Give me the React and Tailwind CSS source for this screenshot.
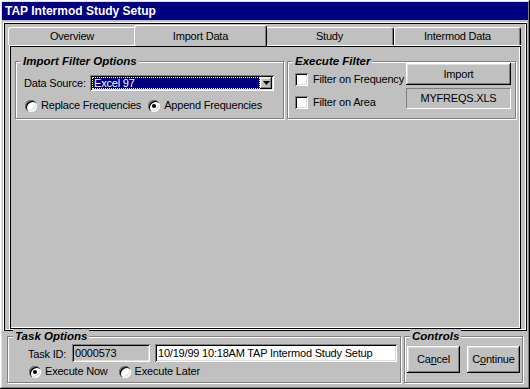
import React from 'react';

const raised = 'shadow-[inset_-1px_-1px_#000,inset_1px_1px_#fff,inset_-2px_-2px_#808080,inset_2px_2px_#dfdfdf]';
const sunken = 'shadow-[inset_1px_1px_#808080,inset_-1px_-1px_#fff,inset_2px_2px_#000,inset_-2px_-2px_#dfdfdf]';

const Group = ({ title, className, children }) => (
  <div className={`relative border border-[#808080] shadow-[inset_1px_1px_#fff,1px_1px_#fff] ${className}`}>
    <span className="absolute top-[-8px] left-[5px] bg-[#c0c0c0] px-[2px] text-[11.5px] font-bold italic leading-[14px] tracking-normal">
      {title}
    </span>
    {children}
  </div>
);

const Radio = ({ checked, label }) => (
  <div className="flex items-center gap-[4px] whitespace-nowrap">
    <span className="w-[12px] h-[12px] rounded-full bg-white flex items-center justify-center shadow-[inset_1px_1px_#808080,inset_2px_2px_#000,inset_-1px_-1px_#fff,inset_-2px_-2px_#dfdfdf]">
      {checked && <span className="w-[4px] h-[4px] rounded-full bg-black" />}
    </span>
    <span>{label}</span>
  </div>
);

const Check = ({ label }) => (
  <div className="flex items-center gap-[5px] h-[13px] whitespace-nowrap">
    <span className={`w-[13px] h-[13px] bg-white ${sunken}`} />
    <span>{label}</span>
  </div>
);

const Tab = ({ label, width }) => (
  <div
    className={`mt-[2px] h-[18px] ${width} flex items-center justify-center border-t border-l border-r border-t-white border-l-white border-r-black rounded-t-[3px] shadow-[inset_-1px_0_#808080]`}
  >
    {label}
  </div>
);

export default function App() {
  return (
    <div
      className={`w-[530px] h-[389px] bg-[#c0c0c0] p-[2px] flex flex-col font-['Liberation_Sans',Arial,sans-serif] text-[11px] tracking-[-0.2px] text-black leading-[13px] ${raised}`}
    >
      <div className="h-[18px] bg-[#000080] text-white font-bold text-[12px] tracking-normal pl-[3px] flex items-center">
        TAP Intermod Study Setup
      </div>

      <div className="mt-[2px] mx-[1px] h-[309px] pt-[2px] shadow-[inset_1px_1px_#fff,inset_-1px_-1px_#000,inset_2px_2px_#000,inset_-2px_-2px_#fff] flex flex-col">
        <div className="flex ml-[5px] mt-[1px] h-[20px] items-start">
          <Tab label="Overview" width="w-[128px]" />
          <div className="relative z-10 mx-[-2px] w-[133px] h-[21px] flex items-center justify-center border-t border-l border-r border-t-white border-l-white border-r-black rounded-t-[3px] bg-[#c0c0c0] shadow-[inset_-1px_0_#808080]">
            Import Data
          </div>
          <Tab label="Study" width="w-[129px]" />
          <Tab label="Intermod Data" width="w-[127px]" />
        </div>

        <div className="ml-[6px] w-[512px] h-[284px] pt-[16px] pl-[6px] flex gap-[3px] items-start shadow-[inset_1px_1px_#fff,inset_-1px_-1px_#000,inset_2px_2px_#000,inset_-2px_-2px_#fff]">
          <Group title="Import Filter Options" className="w-[269px] h-[58px]">
            <div className="flex items-center pl-[8px] pt-[13px]">
              <span className="w-[66px] whitespace-nowrap">Data Source:</span>
              <div className={`w-[184px] h-[16px] bg-white flex items-center p-[2px] ${sunken}`}>
                <div className="flex-1 h-full bg-[#000080] text-white pl-[2px] flex items-center outline-1 outline-dotted outline-[#ffff80] outline-offset-[-1px]">
                  Excel 97
                </div>
                <div className={`w-[12px] h-full bg-[#c0c0c0] flex items-center justify-center ${raised}`}>
                  <svg width="7" height="4" viewBox="0 0 7 4">
                    <path d="M0 0h7L3.5 4z" fill="#000" />
                  </svg>
                </div>
              </div>
            </div>
            <div className="flex items-center pl-[9px] mt-[8px] gap-[7px]">
              <Radio label="Replace Frequencies" />
              <Radio checked label="Append Frequencies" />
            </div>
          </Group>

          <Group title="Execute Filter" className="w-[229px] h-[58px] flex">
            <div className="flex flex-col gap-[10px] pl-[7px] pt-[11px]">
              <Check label="Filter on Frequency" />
              <Check label="Filter on Area" />
            </div>
            <div className="ml-auto mr-[4px] pt-[1px] flex flex-col gap-[3px]">
              <div className={`w-[105px] h-[22px] flex items-center justify-center ${raised}`}>Import</div>
              <div className="w-[105px] h-[21px] flex items-center justify-center border border-t-[#808080] border-l-[#808080] border-b-white border-r-white">
                MYFREQS.XLS
              </div>
            </div>
          </Group>
        </div>
      </div>

      <div className="flex mt-[5px] gap-[3px]">
        <Group title="Task Options" className="ml-[5px] w-[394px] h-[47px]">
          <div className="flex items-center pl-[20px] pt-[7px]">
            <span className="w-[44px] pt-[3px] whitespace-nowrap">Task ID:</span>
            <div className={`w-[78px] h-[18px] bg-[#c0c0c0] pl-[3px] flex items-center ${sunken}`}>0000573</div>
            <div className={`ml-[5px] w-[242px] h-[18px] bg-white pl-[3px] flex items-center whitespace-nowrap ${sunken}`}>
              10/19/99 10:18AM TAP Intermod Study Setup
            </div>
          </div>
          <div className="flex items-center pl-[21px] mt-[3px] gap-[11px]">
            <Radio checked label="Execute Now" />
            <Radio label="Execute Later" />
          </div>
        </Group>
        <Group title="Controls" className="w-[119px] h-[47px]">
          <div className="flex gap-[7px] pl-[2px] pt-[9px]">
            <div className={`w-[53px] h-[27px] flex items-center justify-center ${raised}`}>
              <span>
                Ca<span className="underline">n</span>cel
              </span>
            </div>
            <div className={`w-[53px] h-[27px] flex items-center justify-center ${raised}`}>
              <span>
                C<span className="underline">o</span>ntinue
              </span>
            </div>
          </div>
        </Group>
      </div>
    </div>
  );
}
